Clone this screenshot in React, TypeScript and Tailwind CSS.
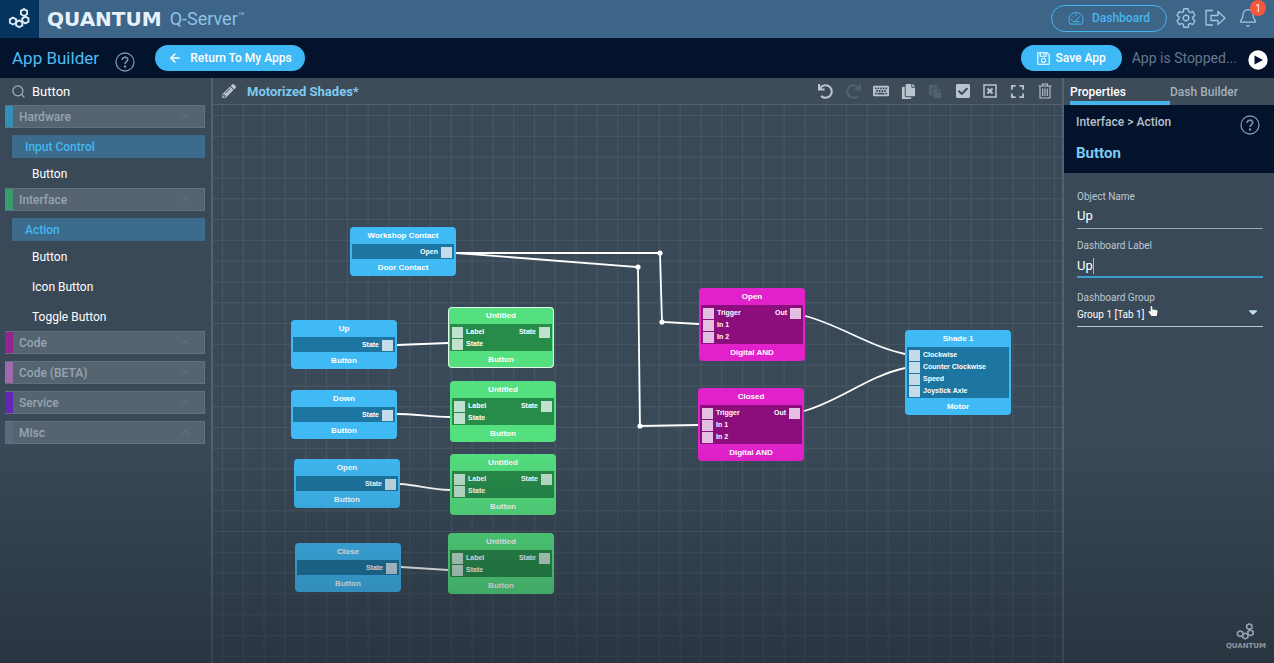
import React, { useState } from 'react';
import {
    FaCaretDown,
    FaCheckSquare,
    FaCopy,
    FaExpand,
    FaHandPointer,
    FaKeyboard,
    FaPaste,
    FaPencilAlt,
    FaRedo,
    FaUndo,
} from 'react-icons/fa';
import { ArrowLeft, Bell, ChevronUp, Search } from 'lucide-react';
import { IoSettingsOutline } from 'react-icons/io5';

type Tone = 'blue' | 'green' | 'magenta';

interface NodeData {
    id: string;
    x: number;
    y: number;
    tone: Tone;
    title: string;
    kind: string;
    inputs?: string[];
    output?: string;
    selected?: boolean;
}

const TONES: Record<Tone, { shell: string; body: string; port: string }> = {
    blue: { shell: 'bg-[#3fbaf5]', body: 'bg-[#1c76a1]', port: 'bg-[#c4dcea]' },
    green: { shell: 'bg-[#55e080]', body: 'bg-[#278c49]', port: 'bg-[#bfe1cd]' },
    magenta: { shell: 'bg-[#e122cb]', body: 'bg-[#8c0e7d]', port: 'bg-[#e3c0e1]' },
};

const NODES: NodeData[] = [
    { id: 'contact', x: 137, y: 122, tone: 'blue', title: 'Workshop Contact', kind: 'Door Contact', output: 'Open' },
    { id: 'up', x: 78, y: 215, tone: 'blue', title: 'Up', kind: 'Button', output: 'State' },
    { id: 'down', x: 78, y: 285, tone: 'blue', title: 'Down', kind: 'Button', output: 'State' },
    { id: 'open', x: 81, y: 354, tone: 'blue', title: 'Open', kind: 'Button', output: 'State' },
    { id: 'close', x: 82, y: 438, tone: 'blue', title: 'Close', kind: 'Button', output: 'State' },
    { id: 'ui1', x: 235, y: 202, tone: 'green', title: 'Untitled', kind: 'Button', inputs: ['Label', 'State'], output: 'State', selected: true },
    { id: 'ui2', x: 237, y: 276, tone: 'green', title: 'Untitled', kind: 'Button', inputs: ['Label', 'State'], output: 'State' },
    { id: 'ui3', x: 237, y: 349, tone: 'green', title: 'Untitled', kind: 'Button', inputs: ['Label', 'State'], output: 'State' },
    { id: 'ui4', x: 235, y: 428, tone: 'green', title: 'Untitled', kind: 'Button', inputs: ['Label', 'State'], output: 'State' },
    { id: 'and1', x: 486, y: 183, tone: 'magenta', title: 'Open', kind: 'Digital AND', inputs: ['Trigger', 'In 1', 'In 2'], output: 'Out' },
    { id: 'and2', x: 485, y: 283, tone: 'magenta', title: 'Closed', kind: 'Digital AND', inputs: ['Trigger', 'In 1', 'In 2'], output: 'Out' },
    { id: 'motor', x: 692, y: 225, tone: 'blue', title: 'Shade 1', kind: 'Motor', inputs: ['Clockwise', 'Counter Clockwise', 'Speed', 'Joystick Axle'] },
];

const WIRES = [
    'M243 148 H447 L449 217 L486 219',
    'M243 148 L425 162 L427 321 L485 320',
    'M184 240 L235 238',
    'M184 309 C200 309 220 312 237 312',
    'M187 379 C205 380 218 385 237 385',
    'M188 462 L235 465',
    'M592 211 C625 219 655 241 692 249',
    'M591 306 C625 297 655 271 692 263',
];

const JOINTS = [[447, 148], [449, 217], [425, 162], [427, 321]];

const GROUPS = [
    { name: 'Hardware', color: 'bg-[#3390b8]', section: 'Input Control', items: ['Button'] },
    { name: 'Interface', color: 'bg-[#379d6f]', section: 'Action', items: ['Button', 'Icon Button', 'Toggle Button'] },
    { name: 'Code', color: 'bg-[#93258f]' },
    { name: 'Code (BETA)', color: 'bg-[#9d6aab]' },
    { name: 'Service', color: 'bg-[#6426b5]' },
    { name: 'Misc', color: 'bg-[#586b80]' },
];

export default function App() {
    return (
        <div className="relative flex min-h-screen flex-col bg-[#3a4957] font-['Roboto',sans-serif] text-white">
            <TopBar />
            <SubBar />
            <div className="flex flex-1">
                <Sidebar />
                <main className="flex min-w-0 flex-1 flex-col">
                    <Toolbar />
                    <Canvas />
                </main>
                <PropertiesPanel />
            </div>
            <div className="pointer-events-none absolute inset-x-0 bottom-0 h-1/3 bg-linear-to-b from-transparent to-[#0f1820]/40" />
        </div>
    );
}

function TopBar() {
    return (
        <header className="flex h-[38px] items-center bg-[#3d6588] pr-4">
            <div className="flex h-full w-[39px] items-center justify-center bg-[#04335e]">
                <LogoMark className="h-6 w-6" />
            </div>
            <span className="ml-2 font-['DejaVu_Sans',sans-serif] text-xl font-bold text-[#e6f1fb]">QUANTUM</span>
            <span className="ml-2 text-lg text-[#8fc0e6]">Q-Server<sup className="text-[11px]">™</sup></span>
            <div className="ml-auto flex items-center gap-3 pb-[2px]">
                <a href="#dashboard" className="flex h-[27px] w-[116px] items-center justify-center gap-2 rounded-full border border-[#47b6ee] text-xs font-medium text-[#47b6ee]">
                    <GaugeIcon />
                    Dashboard
                </a>
                <button aria-label="Settings" className="-ml-1 text-[#a3c6e0]"><IoSettingsOutline size={22} /></button>
                <button aria-label="Log out" className="-ml-1 text-[#a3c6e0]"><LogoutIcon /></button>
                <button aria-label="Notifications" className="relative text-[#a3c6e0]">
                    <Bell size={20} strokeWidth={1.5} />
                    <span className="absolute -top-2 left-3 flex h-4 w-4 items-center justify-center rounded-full bg-[#f4573f] text-[10px] text-white">1</span>
                </button>
            </div>
        </header>
    );
}

function SubBar() {
    return (
        <div className="flex h-10 items-center bg-[#03132b] pr-[6px] pl-3">
            <h1 className="pt-px text-[17px] text-[#4fbdf3]">App Builder</h1>
            <button aria-label="Help" className="mt-2 ml-4 text-[#7f93a8]"><HelpIcon /></button>
            <button className="ml-[20px] flex h-[26px] w-[150px] items-center justify-center gap-2 rounded-full bg-[#3fb9f5] text-xs font-medium">
                <ArrowLeft size={14} strokeWidth={2.5} />
                Return To My Apps
            </button>
            <button className="ml-auto flex h-[26px] w-[101px] items-center justify-center gap-[6px] rounded-full bg-[#3fb9f5] text-xs font-medium">
                <SaveIcon />
                Save App
            </button>
            <span className="ml-[10px] text-sm text-[#64788d]">App is Stopped...</span>
            <button aria-label="Run app" className="mt-1 ml-[11px]">
                <svg width="20" height="20" viewBox="0 0 20 20">
                    <circle cx="10" cy="10" r="9.7" fill="#fff" />
                    <path d="M6.5 5.5 L15 10 L6.5 14.5 Z" fill="#03132b" />
                </svg>
            </button>
        </div>
    );
}

function Sidebar() {
    return (
        <aside className="w-[213px] shrink-0 border-r-2 border-[#536270] pr-[6px] pl-[5px]">
            <label className="flex h-[27px] items-center gap-[6px] pl-[6px]">
                <Search size={15} strokeWidth={2} className="shrink-0 text-[#a9b5c0]" />
                <input aria-label="Search objects" defaultValue="Button" className="w-full bg-transparent text-[13px] outline-none" />
            </label>
            <nav className="flex flex-col">
                {GROUPS.map((group) => (
                    <div key={group.name} className={group.items ? '' : 'mb-[7px]'}>
                        <button className="flex h-[23px] w-full items-center border border-l-0 border-[#62717f] bg-[#566471] pr-[12px] text-xs font-medium text-[#97a4b0]">
                            <span className={`mr-[6px] h-full w-2 ${group.color}`} />
                            {group.name}
                            <ChevronUp size={13} strokeWidth={1.5} className="ml-auto text-[#6f7e8b]" />
                        </button>
                        {group.items && (
                            <>
                                <div className="mt-[7px] ml-[7px] flex h-[23px] items-center bg-[#3c6b8c] pl-[13px] text-xs font-medium text-[#45b7f0]">
                                    {group.section}
                                </div>
                                <ul>
                                    {group.items.map((item) => (
                                        <li key={item} className="flex h-[30px] items-center pt-px pl-[27px] text-xs text-white">{item}</li>
                                    ))}
                                </ul>
                            </>
                        )}
                    </div>
                ))}
            </nav>
        </aside>
    );
}

function Toolbar() {
    return (
        <div className="flex h-[27px] items-center border-b border-[#536270] bg-[#3e4b59] pr-[3px] pl-[9px] text-[#b9c4ce]">
            <button aria-label="Rename"><FaPencilAlt size={14} /></button>
            <h2 className="ml-[11px] pt-px text-[13px] font-bold text-[#7dcbf1]">Motorized Shades*</h2>
            <div className="ml-auto grid w-[247px] grid-cols-9 place-items-center">
                <button aria-label="Undo"><FaUndo size={15} /></button>
                <button aria-label="Redo" className="text-[#53616e]"><FaRedo size={15} /></button>
                <button aria-label="Shortcuts"><FaKeyboard size={16} /></button>
                <button aria-label="Copy"><FaCopy size={15} /></button>
                <button aria-label="Paste" className="text-[#53616e]"><FaPaste size={14} /></button>
                <button aria-label="Select all"><FaCheckSquare size={16} /></button>
                <button aria-label="Deselect all"><DeselectIcon /></button>
                <button aria-label="Fit to screen"><FaExpand size={15} /></button>
                <button aria-label="Delete"><TrashIcon /></button>
            </div>
        </div>
    );
}

function Canvas() {
    return (
        <div className="relative flex-1 overflow-hidden">
            <svg className="absolute inset-0 h-full w-full">
                <defs>
                    <pattern id="grid" x="9" y="10" width="20.8" height="20.8" patternUnits="userSpaceOnUse">
                        <path d="M0.5 0 V20.8 M0 0.5 H20.8" stroke="#485865" strokeWidth="1" />
                    </pattern>
                </defs>
                <rect width="100%" height="100%" fill="url(#grid)" />
                <g fill="none" stroke="#fff" strokeWidth="1.8">
                    {WIRES.map((d) => <path key={d} d={d} />)}
                </g>
                {JOINTS.map(([x, y]) => <circle key={`${x}-${y}`} cx={x} cy={y} r="2.6" fill="#fff" />)}
            </svg>
            {NODES.map((node) => <FlowNode key={node.id} node={node} />)}
        </div>
    );
}

function FlowNode({ node }: { node: NodeData }) {
    const tone = TONES[node.tone];
    return (
        <div
            className={`absolute flex w-[106px] flex-col rounded-[4px] font-['Liberation_Sans',sans-serif] text-[8px] font-bold text-white ${tone.shell} ${node.selected ? 'outline -outline-offset-1 outline-[#e4f7ea]' : ''}`}
            style={{ left: node.x, top: node.y }}
        >
            <div className="h-[17px] text-center leading-[17px]">{node.title}</div>
            <div className={`mx-[2px] flex justify-between px-[2px] pt-[2px] pb-px ${tone.body}`}>
                <div>
                    {node.inputs?.map((name) => (
                        <div key={name} className="flex h-3 items-center gap-[3px] text-[7px]">
                            <span className={`h-[11px] w-[11px] ${tone.port}`} />
                            {name}
                        </div>
                    ))}
                </div>
                {node.output && (
                    <div className="flex h-3 items-center gap-[3px] text-[7px]">
                        {node.output}
                        <span className={`h-[11px] w-[11px] ${tone.port}`} />
                    </div>
                )}
            </div>
            <div className="h-[17px] text-center leading-[17px]">{node.kind}</div>
        </div>
    );
}

function PropertiesPanel() {
    const [name, setName] = useState('Up');
    const [label, setLabel] = useState('Up');

    return (
        <aside className="flex w-[212px] shrink-0 flex-col border-l-2 border-[#536270]">
            <div className="flex h-[27px] bg-[#3e4b59] pl-[6px] text-xs font-medium">
                <button className="w-[100px] border-b-4 border-[#45b4ec] pt-1 text-left">Properties</button>
                <button className="border-b-4 border-transparent pt-1 text-[#a4b0bb]">Dash Builder</button>
            </div>
            <div className="flex h-[68px] justify-between bg-[#03132b] pt-[9px] pr-[14px] pl-3">
                <div>
                    <p className="text-xs font-medium text-[#b4c0cc]">Interface &gt; Action</p>
                    <h3 className="mt-[13px] text-[15px] leading-5 font-bold text-[#7dcbf1]">Button</h3>
                </div>
                <button aria-label="Help" className="mt-px self-start text-[#7f93a8]"><HelpIcon /></button>
            </div>
            <form className="flex flex-col pt-4 pr-[11px] pl-[13px]">
                <label htmlFor="object-name" className="text-[10px] leading-4 text-[#bcc8d2]">Object Name</label>
                <input
                    id="object-name"
                    value={name}
                    onChange={(e) => setName(e.target.value)}
                    className="h-6 border-b border-[#98a9b7] bg-transparent pb-[2px] text-[13px] outline-none"
                />
                <label htmlFor="dash-label" className="mt-[9px] text-[10px] leading-4 text-[#bcc8d2]">Dashboard Label</label>
                <div className="relative flex">
                    <input
                        id="dash-label"
                        value={label}
                        onChange={(e) => setLabel(e.target.value)}
                        className="h-6 w-full border-b-2 border-[#3c9fd0] bg-transparent text-[13px] outline-none"
                    />
                    <span className="absolute top-1 left-4 h-4 w-px bg-[#a9bac7]" />
                </div>
                <label htmlFor="dash-group" className="mt-3 text-[10px] leading-4 text-[#bcc8d2]">Dashboard Group</label>
                <div className="relative flex">
                    <select id="dash-group" className="h-[21px] w-full appearance-none border-b border-[#b5c6d4] bg-transparent pb-1 text-[10px] outline-none">
                        <option>Group 1 [Tab 1]</option>
                    </select>
                    <FaCaretDown size={14} className="pointer-events-none absolute right-[3px] bottom-2 text-[#bfe0f2]" />
                    <FaHandPointer size={10} className="pointer-events-none absolute top-0 left-[71px] text-white" />
                </div>
            </form>
            <div className="mt-auto flex flex-col items-center self-end pr-2 pb-3 text-[#d5dde3]">
                <LogoMark className="h-5 w-5" />
                <span className="font-['DejaVu_Sans',sans-serif] text-[7px] leading-[9px] font-bold">QUANTUM</span>
            </div>
        </aside>
    );
}

function LogoMark({ className }: { className?: string }) {
    return (
        <svg viewBox="0 0 24 24" className={className} fill="none" stroke="#dceaf6" strokeWidth="1.9">
            <path d="M5 10.7 L8.1 12.4 V15.8 L5 17.5 L1.9 15.8 V12.4 Z" />
            <path d="M11.2 13.4 L14.3 15.1 V18.5 L11.2 20.2 L8.1 18.5 V15.1 Z" />
            <path d="M17.4 9.6 L20.5 11.3 V14.7 L17.4 16.4 L14.3 14.7 V11.3 Z" />
            <path d="M16 2.2 L19.1 3.9 V7.3 L16 9 L12.9 7.3 V3.9 Z" />
        </svg>
    );
}

function GaugeIcon() {
    return (
        <svg width="16" height="13" viewBox="0 0 16 13" fill="none" stroke="currentColor" strokeWidth="1" strokeLinecap="round">
            <path d="M2 11.8 A7.2 7.2 0 1 1 14 11.8 Z" strokeLinejoin="round" />
            <path d="M7 9.5 L11.5 4.8 M5 9.6 H11 M3.2 7.6 H4.2 M4.7 4.4 L5.3 5 M8 2.8 V3.6" />
        </svg>
    );
}

function LogoutIcon() {
    return (
        <svg width="21" height="18" viewBox="0 0 21 18" fill="none" stroke="currentColor" strokeWidth="1.3" strokeLinejoin="round" strokeLinecap="round">
            <path d="M7.5 1.5 H1 V16 H7.5" />
            <path d="M6 6.5 H13 V2.5 L20 9 L13 15.5 V11.5 H6 Z" />
        </svg>
    );
}

function HelpIcon() {
    return (
        <svg width="20" height="20" viewBox="0 0 20 20" fill="none" stroke="currentColor" strokeWidth="1.3">
            <circle cx="10" cy="10" r="9" />
            <path d="M7.2 8 C7.2 4.2 12.8 4.4 12.8 7.6 C12.8 9.6 10 9.6 10 12" strokeWidth="1.6" />
            <circle cx="10" cy="14.4" r="0.6" fill="currentColor" />
        </svg>
    );
}

function SaveIcon() {
    return (
        <svg width="13" height="13" viewBox="0 0 13 13" fill="none" stroke="#fff" strokeWidth="1.1">
            <path d="M0.8 0.8 H10 L12.2 3 V12.2 H0.8 Z M3.2 0.8 V4.2 H9 V0.8 M6.8 1.5 V3" />
            <circle cx="6.5" cy="8.3" r="2" />
        </svg>
    );
}

function DeselectIcon() {
    return (
        <svg width="14" height="14" viewBox="0 0 14 14" fill="none" stroke="currentColor">
            <rect x="1" y="1" width="12" height="12" strokeWidth="1.5" />
            <path d="M4.5 4.5 L9.5 9.5 M9.5 4.5 L4.5 9.5" strokeWidth="2" />
        </svg>
    );
}

function TrashIcon() {
    return (
        <svg width="14" height="16" viewBox="0 0 14 16" fill="none" stroke="currentColor" strokeWidth="1.1">
            <path d="M0.5 3 H13.5 M4.5 3 V1 H9.5 V3 M2 3 V15 H12 V3 M4.7 5.5 V13 M7 5.5 V13 M9.3 5.5 V13" />
        </svg>
    );
}
